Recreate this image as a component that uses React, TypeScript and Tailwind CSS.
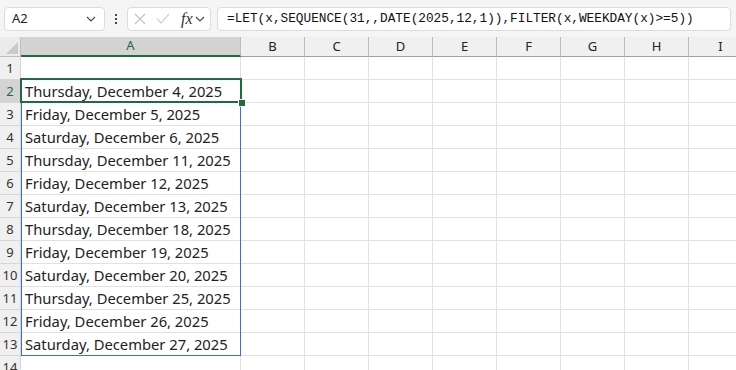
import React from 'react';

const cols = ['B', 'C', 'D', 'E', 'F', 'G', 'H', 'I'];

const dates = [
    'Thursday, December 4, 2025',
    'Friday, December 5, 2025',
    'Saturday, December 6, 2025',
    'Thursday, December 11, 2025',
    'Friday, December 12, 2025',
    'Saturday, December 13, 2025',
    'Thursday, December 18, 2025',
    'Friday, December 19, 2025',
    'Saturday, December 20, 2025',
    'Thursday, December 25, 2025',
    'Friday, December 26, 2025',
    'Saturday, December 27, 2025',
];

const Chevron = () => (
    <svg width="10" height="6" viewBox="0 0 10 6" fill="none">
        <path d="M1 1l4 4 4-4" stroke="#444" strokeWidth="1.1" />
    </svg>
);

const App = () => {
    const rows = Array.from({ length: 14 }, (_, i) => i + 1);

    return (
        <div className="w-[736px] h-[370px] overflow-hidden bg-white text-[#222]" style={{ fontFamily: '"Noto Sans", sans-serif' }}>
            {/* formula bar */}
            <div className="h-[37px] bg-[#f5f5f5] flex items-center pl-[4px]">
                <div className="w-[101px] h-[24px] bg-white border border-[#dcdcdc] rounded-[4px] flex items-center justify-between pl-[7px] pr-[8px] text-[13px]">
                    <span>A2</span>
                    <Chevron />
                </div>
                <div className="w-[22px] flex flex-col items-center gap-[2px]">
                    <span className="w-[2px] h-[2px] bg-[#444]" />
                    <span className="w-[2px] h-[2px] bg-[#444]" />
                    <span className="w-[2px] h-[2px] bg-[#444]" />
                </div>
                <div className="w-[84px] h-[24px] bg-white border border-[#dcdcdc] rounded-[4px] flex items-center pl-[6px] pr-[5px]">
                    <svg width="12" height="12" viewBox="0 0 12 12" fill="none">
                        <path d="M1 1l10 10M11 1L1 11" stroke="#c2c2c2" strokeWidth="1.1" />
                    </svg>
                    <svg className="ml-[10px]" width="14" height="11" viewBox="0 0 14 11" fill="none">
                        <path d="M1 5.5l4 4.5L13 1" stroke="#c2c2c2" strokeWidth="1.1" />
                    </svg>
                    <span className="ml-[11px] text-[16px] italic text-[#333] leading-none" style={{ fontFamily: '"Liberation Serif", serif' }}>fx</span>
                    <span className="ml-[2px]"><Chevron /></span>
                </div>
                <div className="ml-[6px] w-[514px] h-[24px] bg-white border border-[#dcdcdc] rounded-[4px] flex items-center pl-[9px] text-[12.75px] text-[#111]" style={{ fontFamily: '"Liberation Mono", monospace' }}>
                    =LET(x,SEQUENCE(31,,DATE(2025,12,1)),FILTER(x,WEEKDAY(x)&gt;=5))
                </div>
            </div>

            {/* sheet */}
            <div className="relative grid grid-cols-[21px_220px_repeat(8,64px)] grid-rows-[20px_repeat(14,23px)] text-[14.75px]">
                {/* header row */}
                <div className="bg-[#ebebeb] border-r border-b border-[#bdbdbd] flex items-end justify-end">
                    <svg width="12" height="12" viewBox="0 0 12 12" className="mb-[2px] mr-[2px]">
                        <path d="M12 0v12H0z" fill="#c9c9c9" />
                    </svg>
                </div>
                <div className="bg-[#d3d3d3] border-r border-[#bdbdbd] border-b-2 border-b-[#1d6b3e] flex items-center justify-center text-[13px] text-[#1d6b3e]">A</div>
                {cols.map((c) => (
                    <div key={c} className="bg-[#f0f0f0] border-r border-b border-[#bdbdbd] border-b-[#a0a0a0] flex items-center justify-center text-[13px] text-[#222]">{c}</div>
                ))}

                {rows.map((r) => (
                    <React.Fragment key={r}>
                        <div className={`${r === 2 ? 'bg-[#d3d3d3] text-[#1d6b3e]' : 'bg-[#f0f0f0] text-[#333]'} border-r border-b border-[#d6d6d6] flex items-center justify-center text-[13px] pt-[1px]`}>{r}</div>
                        <div className="border-r border-b border-[#e1e1e1] flex items-center pl-[4px] pt-[1px] whitespace-nowrap text-[#222]">
                            {r >= 2 && r <= 13 ? dates[r - 2] : ''}
                        </div>
                        {cols.map((c) => (
                            <div key={c} className="border-r border-b border-[#e1e1e1]" />
                        ))}
                    </React.Fragment>
                ))}

                {/* spill range */}
                <div className="absolute left-[21px] top-[65px] w-[220px] h-[254px] border border-[#3a6fd1] pointer-events-none" />
                {/* active cell */}
                <div className="absolute left-[20px] top-[41px] w-[222px] h-[25px] border-2 border-[#1d6b3e] pointer-events-none" />
                <div className="absolute left-[238px] top-[62px] w-[6px] h-[6px] bg-[#1d6b3e] border border-white box-content pointer-events-none" />
            </div>
        </div>
    );
};

export default App;
